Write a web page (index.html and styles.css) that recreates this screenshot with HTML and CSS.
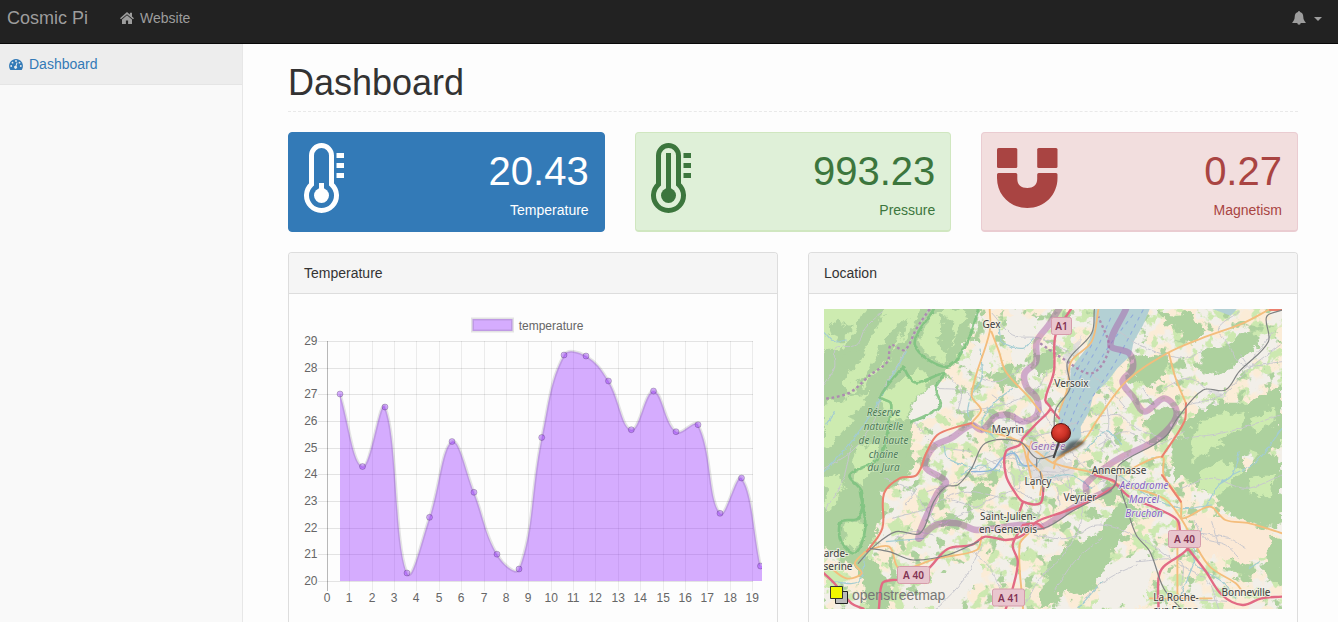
FILE: index.html
```
<!DOCTYPE html>
<html lang="en">
<head>
<meta charset="utf-8">
<title>Cosmic Pi</title>
<link rel="stylesheet" href="styles.css">
</head>
<body>
<nav class="navbar">
  <a class="brand">Cosmic Pi</a>
  <a class="nav-link">
    <svg class="home-icon" viewBox="0 0 14 12"><path d="M7 0 0 6.200l1 1.100L7 2.200l6 5.100 1-1.100-2-1.800V.8H9.900v1.700zM7 3.300 2 7.500V12h3.900V8.500h2.200V12H12V7.500z"/></svg>
    <span>Website</span>
  </a>
  <a class="alerts">
    <svg class="bell-icon" viewBox="0 0 14 14"><path d="M7 0a1 1 0 0 0-1 1C3.500 1.500 2.800 3.600 2.700 6 2.600 8.600 1.800 9.800.3 11.500V12h5a1.700 1.700 0 0 0 3.400 0h5v-.5C12.200 9.800 11.400 8.600 11.300 6 11.200 3.600 10.500 1.500 8 1a1 1 0 0 0-1-1z"/></svg>
    <span class="caret"></span>
  </a>
</nav>
<div class="shell">
  <aside class="sidebar">
    <a class="side-link">
      <svg class="gauge-icon" viewBox="0 0 14 11"><path fill="#337ab7" d="M7 0a7 7 0 0 0-6 10.500q.3.500.8.500h10.400q.5 0 .8-.5A7 7 0 0 0 7 0z"/><g fill="#ececec"><circle cx="2.200" cy="7" r=".9"/><circle cx="3.500" cy="3.700" r=".9"/><circle cx="7" cy="2" r=".9"/><circle cx="10.500" cy="3.700" r=".9"/><circle cx="11.800" cy="7" r=".9"/><path d="m8.500 3.800-1 3.300a1.500 1.500 0 1 1-1-.3l1-3.300z"/></g></svg>
      <span>Dashboard</span>
    </a>
  </aside>
  <main class="content">
    <h1 class="title">Dashboard</h1>
    <section class="stats">
      <div class="card card-blue">
        <svg class="therm" viewBox="0 0 40 70"><path class="tube" d="M7.500 12.500a10 10 0 0 1 20 0V41.300a15 15 0 1 1-20 0z"/><circle cx="17.500" cy="52.500" r="7.500"/><path d="M15 40h5v8h-5zM32.500 10H40v5h-7.500zM32.500 20H40v5h-7.500zM32.500 30H40v5h-7.500z"/></svg>
        <div class="reading"><div class="value">20.43</div><div>Temperature</div></div>
      </div>
      <div class="card card-green">
        <svg class="therm" viewBox="0 0 40 70"><path class="tube" d="M7.500 12.500a10 10 0 0 1 20 0V41.300a15 15 0 1 1-20 0z"/><circle cx="17.500" cy="52.500" r="7.500"/><path d="M15 10h5v38h-5zM32.500 10H40v5h-7.500zM32.500 20H40v5h-7.500zM32.500 30H40v5h-7.500z"/></svg>
        <div class="reading"><div class="value">993.23</div><div>Pressure</div></div>
      </div>
      <div class="card card-red">
        <svg class="magnet" viewBox="0 0 61 70"><rect y="5" width="20.300" height="20" rx="1.500"/><rect x="40.200" y="5" width="20.300" height="20" rx="1.500"/><path d="M1.500 30h17.300q1.500 0 1.500 1.500V36c0 6 4 9 9.950 9s9.950-3 9.950-9v-4.500q0-1.500 1.500-1.500H59q1.500 0 1.500 1.500V35c0 17-13 30-30.250 30S0 52 0 35v-3.500Q0 30 1.500 30z"/></svg>
        <div class="reading"><div class="value">0.27</div><div>Magnetism</div></div>
      </div>
    </section>
    <section class="panels">
      <div class="panel">
        <div class="panel-head">Temperature</div>
        <div class="panel-body">
          <svg id="chart" class="chart" viewBox="304 309 458 300"></svg>
        </div>
      </div>
      <div class="panel">
        <div class="panel-head">Location</div>
        <div class="panel-body">
          <svg class="map" viewBox="0 0 458 300">
            <defs>
              <filter id="meadow" x="0" y="0" width="100%" height="100%" color-interpolation-filters="sRGB"><feTurbulence type="fractalNoise" baseFrequency=".075" numOctaves="4" seed="8"/><feColorMatrix values="0 0 0 0 .80 0 0 0 0 .91 0 0 0 0 .69 12 0 0 0 -6.500"/><feComposite in2="SourceGraphic" operator="in"/></filter>
              <filter id="fields" x="0" y="0" width="100%" height="100%" color-interpolation-filters="sRGB"><feTurbulence type="fractalNoise" baseFrequency=".04" numOctaves="3" seed="21"/><feColorMatrix values="0 0 0 0 .985 0 0 0 0 .925 0 0 0 0 .845 0 14 0 0 -6.600"/><feComposite in2="SourceGraphic" operator="in"/></filter>
              <filter id="woods" x="0" y="0" width="100%" height="100%" color-interpolation-filters="sRGB"><feTurbulence type="fractalNoise" baseFrequency=".08" numOctaves="4" seed="5"/><feColorMatrix values="0 0 0 0 .68 0 0 0 0 .82 0 0 0 0 .62 0 0 14 0 -8.700"/><feComposite in2="SourceGraphic" operator="in"/></filter>
              <filter id="rough" x="-5%" y="-5%" width="110%" height="110%" color-interpolation-filters="sRGB"><feTurbulence type="fractalNoise" baseFrequency=".09" numOctaves="4" seed="3"/><feDisplacementMap in="SourceGraphic" scale="16" xChannelSelector="R" yChannelSelector="G"/></filter>
              <filter id="wobble" x="-5%" y="-5%" width="110%" height="110%" color-interpolation-filters="sRGB"><feTurbulence type="fractalNoise" baseFrequency=".06" numOctaves="2" seed="12"/><feDisplacementMap in="SourceGraphic" scale="10" xChannelSelector="R" yChannelSelector="G"/></filter>
              <filter id="soft" x="-40%" y="-80%" width="180%" height="260%"><feGaussianBlur stdDeviation="1.500"/></filter>
              <radialGradient id="ball" cx=".4" cy=".35" r=".65"><stop offset="0" stop-color="#e8493c"/><stop offset=".6" stop-color="#cb3126"/><stop offset="1" stop-color="#8d1d16"/></radialGradient>
            </defs>
            <rect width="458" height="300" fill="#f2efe9"/>
            <rect width="458" height="300" filter="url(#fields)"/>
            <rect width="458" height="300" filter="url(#meadow)"/>
            <rect width="458" height="300" filter="url(#woods)"/>
            <g filter="url(#rough)">
              <g transform="scale(.3431 .3333) translate(-70 -192)">
                <path fill="#add19e" d="M40 160H535L500 260 440 360 390 440 330 520 310 600 350 650 300 700 240 740 235 850 190 920 230 960 270 1050 250 1120H200L180 1000 130 930 40 900z"/>
                <path fill="#cdebb0" d="M60 170H200L150 290 70 330zM250 180H370L300 290 220 390 150 440 120 420 200 300zM385 205 440 192 490 215 440 290 420 360 340 300zM310 400 350 370 385 400 350 450 300 520 265 530 240 450zM70 480 150 450 200 440 150 530 100 590 70 600zM150 630 215 590 230 640 180 720 150 680zM70 700 120 680 130 730 80 810zM130 830 180 840 185 880 160 920 125 890zM75 960 130 975 120 1050 70 1030z"/>
                <path fill="#add19e" d="M250 290 290 240 320 210 270 330 160 430zM100 230 150 250 130 290 90 270zM110 340 170 310 180 350 120 380zM390 270 420 230 400 205 450 230 430 330z"/>
                <path fill="#f2efe9" d="M600 210 690 220 670 320 640 360 600 300zM500 290 560 300 550 380 500 370zM360 440 430 400 460 430 420 490 350 540 310 520zM1270 330 1340 280 1370 310 1230 440 1160 470 1150 430zM880 980 1000 910 1040 970 1000 1091H860zM380 990 520 930 530 1000 450 1091H330z"/>
                <path fill="#dcdadc" opacity=".8" d="M660 590 740 600 780 640 800 700 740 720 680 700 640 640zM790 300 830 280 800 340 780 400 760 380zM880 690 930 680 940 720 890 730zM1190 440 1250 440 1220 470zM590 590 640 600 620 630z"/>
                <path fill="#add19e" d="M1040 200 1150 205 1180 260 1140 290 1080 240zM980 330 1070 340 1060 410 1010 430 960 370zM1170 320 1260 290 1310 260 1340 300 1280 350 1220 390 1170 380zM1130 520 1200 470 1310 470 1405 420V600L1360 630 1300 610 1290 700 1180 750 1120 690 1080 720 1090 600zM1200 700 1290 690 1350 620 1405 650V830L1340 850 1240 800zM1260 950 1330 960 1320 990 1240 985zM1340 890 1405 880V1020L1360 1000zM870 870 910 800 960 760 990 790 930 880 890 970 840 1040 780 1050 690 1091 720 980 780 900zM870 750 910 710 950 760 900 780zM270 600 330 560 300 670 250 640zM560 390 620 350 630 420 590 440zM680 320 730 320 740 370 700 390zM430 810 490 820 460 850 400 840z"/>
                <path fill="#cdebb0" d="M1180 520 1300 500 1270 560 1190 620 1140 650 1150 550zM1160 680 1240 650 1290 670 1230 750 1150 740zM960 880 1010 870 1040 920 990 910zM1320 520 1370 490 1390 530 1330 570zM1310 700 1380 690 1370 760 1320 750z"/>
                <path fill="#fbe9d6" d="M1130 810 1270 820 1390 860 1360 920 1300 960 1220 930 1170 940z"/>
                <path fill="#add19e" d="M830 680 870 660 900 680 870 700zM1010 520 1080 480 1100 530 1070 580 1020 590zM500 730 540 700 550 750 490 780z"/>
              </g>
            </g>
            <g transform="scale(.3431 .3333) translate(-70 -192)"><path fill="#b3d0d4" d="M862 185H1022L1000 240 972 290 965 330 925 370 895 410 855 450 843 500 818 545 820 575 790 610 765 637 742 632 752 560 756 490 785 430 790 370 835 310 855 250zM1185 185H1280L1255 212z"/></g>
            <g class="roads" transform="scale(.3431 .3333) translate(-70 -192)" fill="none" stroke-linejoin="round" stroke-linecap="round">
              <g filter="url(#wobble)">
              <g stroke="#c6c6cd" stroke-width="2.800">
                <path d="M375 195 320 290 290 350 240 440 215 530 150 620 70 670M70 420 100 370 105 310 165 300 190 250 240 200M150 600 120 720 75 790M400 430 480 440 540 500 650 530 760 490M470 500 590 480 690 430 720 380M330 530 400 600 500 620M250 700 330 740 400 830 470 810 560 760 640 730M370 740 480 700 560 650 640 620M270 820 370 790 470 740 600 760M560 450 620 500 640 570 740 560 810 530M620 620 660 700 730 690 810 740 900 700M640 730 650 680 760 680 830 650M700 490 780 610 860 700M810 460 870 510 930 510 980 550 1060 580M850 390 900 430 950 490M930 260 1010 310 1120 340 1170 320M1400 300 1310 370 1230 450 1130 480M1405 350 1290 360 1250 300 1220 250 1280 200M870 600 950 560 1030 600 1120 560M820 760 820 830 760 940 700 1000 650 1091M530 900 480 1000 400 1091M430 910 500 920 560 980 600 1080M680 870 780 880 870 840 990 880 1110 960 1190 1010 1220 1091M1130 860 1250 880 1300 910M1110 730 1200 700 1300 730 1405 690M1120 580 1250 560 1400 510M980 950 1110 950 1120 1050 1250 1070M740 1040 800 950 880 880M830 1060 900 1000 980 960M560 205 620 270 700 280 800 330M490 385 570 410 650 370"/>
                <path d="M640 650 600 640 555 680 520 690M630 590 680 560 720 590 790 650M700 700 745 720 755 780M740 650 780 700 790 750M1310 370 1285 330M1380 260 1290 380M720 640 830 590M620 730 700 780 690 820M650 770 710 840M440 400 470 440 460 500M820 560 880 560 930 620M890 460 900 540 880 620M1000 430 1030 480M1150 830 1180 880 1240 900 1280 940M1200 830 1220 900M1060 430 1130 400 1200 440M280 880 330 860 390 870M430 760 520 790 600 820M310 780 340 730M540 640 620 690 620 740"/>
              </g>
              <g stroke="#a3ccd2" stroke-width="3.500">
                <path d="M310 320 270 390 230 470 150 590 70 680M525 315 530 400 500 450 490 510 530 560M620 430 560 480 530 540 570 580M470 690 530 660 580 680 590 640 620 620 640 660 680 660 725 620M420 600 430 640 510 670M720 700 790 690 850 730M930 690 1010 750 1110 790 1200 780M1405 550 1330 650 1230 710 1180 790M1280 620 1260 690 1220 720M190 930 170 1010 90 1010M250 890 360 880M1170 850 1150 950 1230 1010 1270 1060M1340 950 1310 970M580 245 590 290 650 310 680 280M830 620 890 560 940 600M1110 1050 1150 950M810 1091 880 1010"/>
                <path d="M70 260 100 290 135 285M75 540 100 500"/>
              </g>
              </g>
              <g stroke="#8fa9dc" stroke-width="3" stroke-dasharray="9 15"><path d="M1000 195 920 350 850 460 790 570M970 210 890 320 820 450 770 580M905 220 870 300 800 430 760 540M850 300 800 390 760 490"/></g>
              <path stroke="#8fb5dc" stroke-width="4" d="M500 680 560 675 590 640 625 625 650 660 690 660"/>
              <g filter="url(#wobble)" stroke="#7cc27f" stroke-width="8" opacity=".85"><path d="M390 192 335 300 430 365 490 285 520 192M300 365 235 455 265 475 260 530 230 640 145 690 180 740 170 820 120 830 120 890 160 925 190 850 175 740M300 365 335 412 420 385 395 430 410 480 370 510 325 530"/></g>
              <path stroke="#ad8bb0" stroke-width="7" stroke-linecap="butt" stroke-dasharray="8 8" d="M378 192 340 250 305 315 265 300 255 350 205 390 150 440 110 455 70 462M700 295 765 340 850 385 900 310 870 215"/>
              <g stroke="#a65aa5" stroke-width="19" stroke-opacity=".46"><path d="M755 192 725 240 690 290 688 350 655 385 660 425 690 460 690 510 650 530 610 510 570 515 530 555 500 540 440 580 390 605 365 665 425 710 400 745 345 880 395 840 460 835 515 855 640 840 705 845 740 825 810 780 900 735M835 740 835 715 900 660 940 635 1030 590 1090 530 1095 490 1060 460 1005 500 970 455 940 410 970 370 960 325 905 300 950 192"/></g>
              <g stroke="#f4bd7c" stroke-width="5.500"><path d="M553 192 553 260 500 450 528 495 503 540 640 590 660 640 680 730M558 260 580 320 600 380 670 460 700 500M870 192 850 290 790 350 780 430 755 500M1370 192 1290 235 1170 280 1070 325 950 410 870 520 820 595 750 640 740 670M1075 325 1095 400 1125 475M640 590 690 620 740 655 860 685 920 715M740 650 770 630M930 690 1055 635 1060 690 1110 770 1115 820 1195 785 1240 825 1310 835 1405 865M920 715 1060 760 1110 820 1190 960 1270 1015 1290 1040M1100 830 1100 1050M1020 1060 1200 1060M195 915 260 905 290 970 400 940 515 915 530 875M190 920 160 955 180 985 135 1000 80 960M670 860 640 900 650 1091M675 590 665 640 705 690 700 750"/></g>
              <g stroke="#eb806e" stroke-width="6"><path d="M195 920 240 850 245 745 290 700 340 690 370 620 400 570 460 545 500 535M1125 475 1120 530 1055 635M1055 690 1110 770M1370 195 1405 195"/></g>
              <g stroke="#e26a84" stroke-width="7"><path d="M790 192 745 270 740 380 715 465 730 490 690 535 650 580 640 600 600 620 600 690 625 740 650 770 700 775 710 730M730 490 755 520M650 770 640 800M70 985 100 1015 150 1075 185 1091M230 1091 240 1015 270 1005 310 1005 370 975 430 912 500 900 540 875 600 885 650 870 690 830 770 800 850 765 920 715 860 690M650 840 620 900 635 950 620 1030 600 1091M920 715 960 755 1050 795 1100 825 1110 870 1130 910 1060 965 1045 1000 1045 1091M1130 910 1180 975 1230 1050 1290 1080 1345 1060 1405 1055M650 840 690 835 710 850"/></g>
              <g stroke="#7f8283" stroke-width="3.500"><path d="M858 192 850 265 780 350 787 430 745 495 742 580M742 630 690 640 640 590 540 595 500 670 460 720 425 725 390 770 350 865 280 860 215 905 170 955M205 910 260 920 330 945 430 930 520 890M620 850 710 850 800 795 900 740 920 715 930 660 1030 600 1070 570 1100 520 1175 435 1240 435 1280 380 1365 290 1360 215 1405 195M930 720 950 780 980 870 1020 920 1060 1030 1110 1091M690 640 690 665M700 680 710 740"/></g>
            </g>
            <g class="shield"><rect x="227.500" y="8.500" width="20" height="17" rx="2"/><text x="237.500" y="20.500">A1</text><rect x="73.500" y="257.500" width="32" height="17" rx="2"/><text x="89.500" y="270">A 40</text><rect x="168.500" y="280" width="32" height="17" rx="2"/><text x="184.500" y="292.500">A 41</text><rect x="344.500" y="221.500" width="32" height="17" rx="2"/><text x="360.500" y="234">A 40</text></g>
            <g class="place"><text x="167.500" y="19">Gex</text><text x="247.500" y="78">Versoix</text><text x="184" y="124">Meyrin</text><text x="214" y="176">Lancy</text><text x="295" y="165">Annemasse</text><text x="256" y="192">Veyrier</text><text x="184" y="211">Saint-Julien-</text><text x="184" y="224">en-Genevois</text><text x="12" y="248">arde-</text><text x="14" y="261">serine</text><text x="422" y="287">Bonneville</text><text x="352" y="292">La Roche-</text><text x="352" y="305">sur-Foron</text></g>
            <g class="reserve"><text x="59.500" y="107">Réserve</text><text x="59.500" y="121">naturelle</text><text x="59.500" y="135">de la haute</text><text x="59.500" y="149">chaîne</text><text x="59.500" y="162">du Jura</text></g>
            <g class="airport"><text x="320" y="180">Aérodrome</text><text x="320" y="194">Marcel</text><text x="320" y="208">Bruchon</text></g>
            <text class="city" x="224" y="141">Genève</text>
            <path d="M232 149 246 133Q258 129 261 134L252 140z" fill="#222" opacity=".6" filter="url(#soft)"/>
            <path d="m235 133-5.500 16" stroke="#444" stroke-width="2.200"/><circle cx="237" cy="124" r="9.500" fill="url(#ball)" stroke="#5a1612"/>
            <path d="M11.500 282.500h12v12h-12z" fill="#bbb" stroke="#222"/><path d="M6.500 277.500h12v12h-12z" fill="#f1f800" stroke="#333"/>
            <text class="credit" x="28" y="291">openstreetmap</text>
          </svg>
        </div>
      </div>
    </section>
  </main>
</div>
<script src="chart.js"></script>
</body>
</html>
```
FILE: styles.css
```
* { box-sizing: border-box; }
body { margin: 0; height: 622px; overflow: hidden; background: #fdfdfd; color: #333; font: 14px/20px "Liberation Sans", Arial, sans-serif; }
svg { display: block; }
.navbar { height: 44px; display: flex; align-items: flex-start; padding: 8px 16px 0 7px; background: #222; border-bottom: 1px solid #080808; color: #9d9d9d; }
.brand { font-size: 18px; }
.nav-link { display: flex; margin-left: 32px; gap: 6px; }
.home-icon { width: 14px; height: 12px; margin-top: 4px; fill: #9d9d9d; }
.alerts { display: flex; margin-left: auto; gap: 8px; }
.bell-icon { width: 14px; height: 14px; margin-top: 3px; fill: #9d9d9d; }
.caret { width: 8px; height: 4px; margin-top: 9px; border: 4px solid transparent; border-top-color: #9d9d9d; border-bottom: 0; }
.shell { display: flex; height: 578px; overflow: hidden; }
.sidebar { width: 243px; flex: none; background: #f9f9f9; border-right: 1px solid #e7e7e7; }
.side-link { display: flex; gap: 6px; height: 41px; padding: 10px 9px; background: #ededed; border-bottom: 1px solid #e5e5e5; color: #337ab7; }
.gauge-icon { width: 14px; height: 11px; margin-top: 5px; }
.content { flex: 1; display: flex; flex-direction: column; padding: 18px 40px 0 45px; }
.title { flex: none; margin: 0 0 20px; height: 50px; padding-bottom: 9px; border-bottom: 1px dashed #e9e9e9; font-size: 36px; font-weight: 400; line-height: 41px; }
.stats { display: grid; grid-template-columns: repeat(3, 1fr); gap: 30px; }
.card { display: flex; justify-content: space-between; height: 100px; padding: 10px 15px; border: 1px solid; border-radius: 4px; }
.card-blue { background: #337ab7; border-color: #337ab7; color: #fff; }
.card-green { background: #dff0d8; border-color: #d0e7c0; border-bottom-width: 2px; color: #3c763d; }
.card-red { background: #f2dede; border-color: #eaccd1; border-bottom-width: 2px; color: #a94442; }
.therm { width: 40px; height: 70px; fill: currentColor; }
.tube { fill: none; stroke: currentColor; stroke-width: 5; }
.magnet { width: 61px; height: 70px; fill: currentColor; }
.reading { text-align: right; }
.value { font-size: 40px; line-height: 57px; }
.panels { flex: 1; display: grid; grid-template-columns: 1fr 1fr; gap: 30px; margin-top: 20px; }
.panel { border: 1px solid #ddd; border-bottom: 0; border-radius: 4px 4px 0 0; }
.panel-head { height: 41px; padding: 10px 15px; background: #f5f5f5; border-bottom: 1px solid #ddd; border-radius: 3px 3px 0 0; }
.panel-body { padding: 15px 15px 0; }
.chart, .map { width: 458px; height: 300px; overflow: hidden; }
.chart text { font-size: 12px; fill: #666; }
.grid { stroke: #000; stroke-opacity: .1; }
.grid-v { stroke: #000; stroke-opacity: .07; }
.axis { stroke: #000; stroke-opacity: .27; }
.area { fill: rgba(153, 51, 255, .4); }
.line { fill: none; stroke: #000; stroke-opacity: .1; stroke-width: 3; }
.dot { fill: rgba(153, 51, 255, .4); stroke: #000; stroke-opacity: .2; }
.map text { font-family: "Noto Sans", sans-serif; text-anchor: middle; paint-order: stroke; }
.map .place text { font-size: 10px; fill: #3d3d3d; stroke: #f7f4ee; stroke-opacity: .7; stroke-width: 2px; }
.map .reserve text { font-size: 10px; font-style: italic; fill: #4b7a55; stroke: #cfe6c4; stroke-width: 1px; }
.map .airport text { font-size: 10px; font-style: italic; fill: #8461c4; stroke: #eef1e4; stroke-width: 1.500px; }
.map .city { font-size: 11px; font-style: italic; fill: #9c74b3; stroke: #f0eae8; stroke-width: 1.500px; }
.shield rect { fill: #e9c6ce; stroke: #d69cab; }
.map .shield text { font-size: 10px; font-weight: 600; fill: #823353; }
.map .credit { font: 14px "Liberation Sans", Arial, sans-serif; text-anchor: start; fill: #777; }
```
FILE: chart.js
```
const svg = document.getElementById('chart');
const make = (tag, attrs, text) => {
  const el = document.createElementNS('http://www.w3.org/2000/svg', tag);
  for (const k in attrs) el.setAttribute(k, attrs[k]);
  if (text !== undefined) el.textContent = text;
  svg.appendChild(el);
};

// Bezier path through the points; control arms scale with neighbour distance
const spline = (points, tension) => {
  const ctrl = points.map((p, i) => {
    const a = points[i - 1] || p, b = points[i + 1] || p;
    const d1 = Math.hypot(p[0] - a[0], p[1] - a[1]), d2 = Math.hypot(b[0] - p[0], b[1] - p[1]);
    const sum = d1 + d2 || 1, f1 = tension * d1 / sum, f2 = tension * d2 / sum;
    return [p[0] - f1 * (b[0] - a[0]), p[1] - f1 * (b[1] - a[1]), p[0] + f2 * (b[0] - a[0]), p[1] + f2 * (b[1] - a[1])];
  });
  let d = `M${points[0]}`;
  for (let i = 1; i < points.length; i++) {
    d += `C${ctrl[i - 1][2]} ${ctrl[i - 1][3]} ${ctrl[i][0]} ${ctrl[i][1]} ${points[i]}`;
  }
  return d;
};

const points = [[340,394],[362.5,466.5],[385,407],[407,573],[429.5,517.3],[452,441.5],[474,492.3],[497,554.2],[519,569],[541.7,437.5],[564,355],[586,356],[608.5,381],[631.3,429.7],[653.5,391],[676,431.7],[698,424.7],[720,513.3],[741.5,478],[760.5,566]];

// Grid lines and tick labels
for (let i = 0; i <= 9; i++) {
  const y = Math.round(341 + i * 26.67) + .5;
  make('path', { class: 'grid', d: `M318 ${y}H753` });
  make('text', { x: 317.5, y: y + 3.5, 'text-anchor': 'end' }, 29 - i);
}
for (let i = 0; i <= 19; i++) {
  const x = Math.round(327 + i * 22.37) + .5;
  make('path', { class: i ? 'grid-v' : 'axis', d: `M${x} 341V591` });
  make('text', { x: x - .3, y: 602, 'text-anchor': 'middle' }, i);
}

const curve = spline(points, .4);
make('path', { class: 'area', d: curve + 'H762V581H340Z' });
make('path', { class: 'line', d: curve });
points.forEach(p => make('circle', { class: 'dot', cx: p[0], cy: p[1], r: 3 }));

// Legend
make('rect', { class: 'area', x: 472.5, y: 319, width: 40, height: 12 });
make('rect', { class: 'line', x: 472.5, y: 319, width: 40, height: 12 });
make('text', { x: 518.7, y: 330 }, 'temperature');

// Round the corners of roads, rivers and borders on the map
document.querySelectorAll('.roads path').forEach(path => {
  const lines = path.getAttribute('d').split('M').filter(Boolean);
  path.setAttribute('d', lines.map(line => {
    const n = line.trim().split(/\s+/).map(Number);
    const pts = [];
    for (let i = 0; i + 1 < n.length; i += 2) pts.push([n[i], n[i + 1]]);
    return spline(pts, .35);
  }).join(''));
});
```
